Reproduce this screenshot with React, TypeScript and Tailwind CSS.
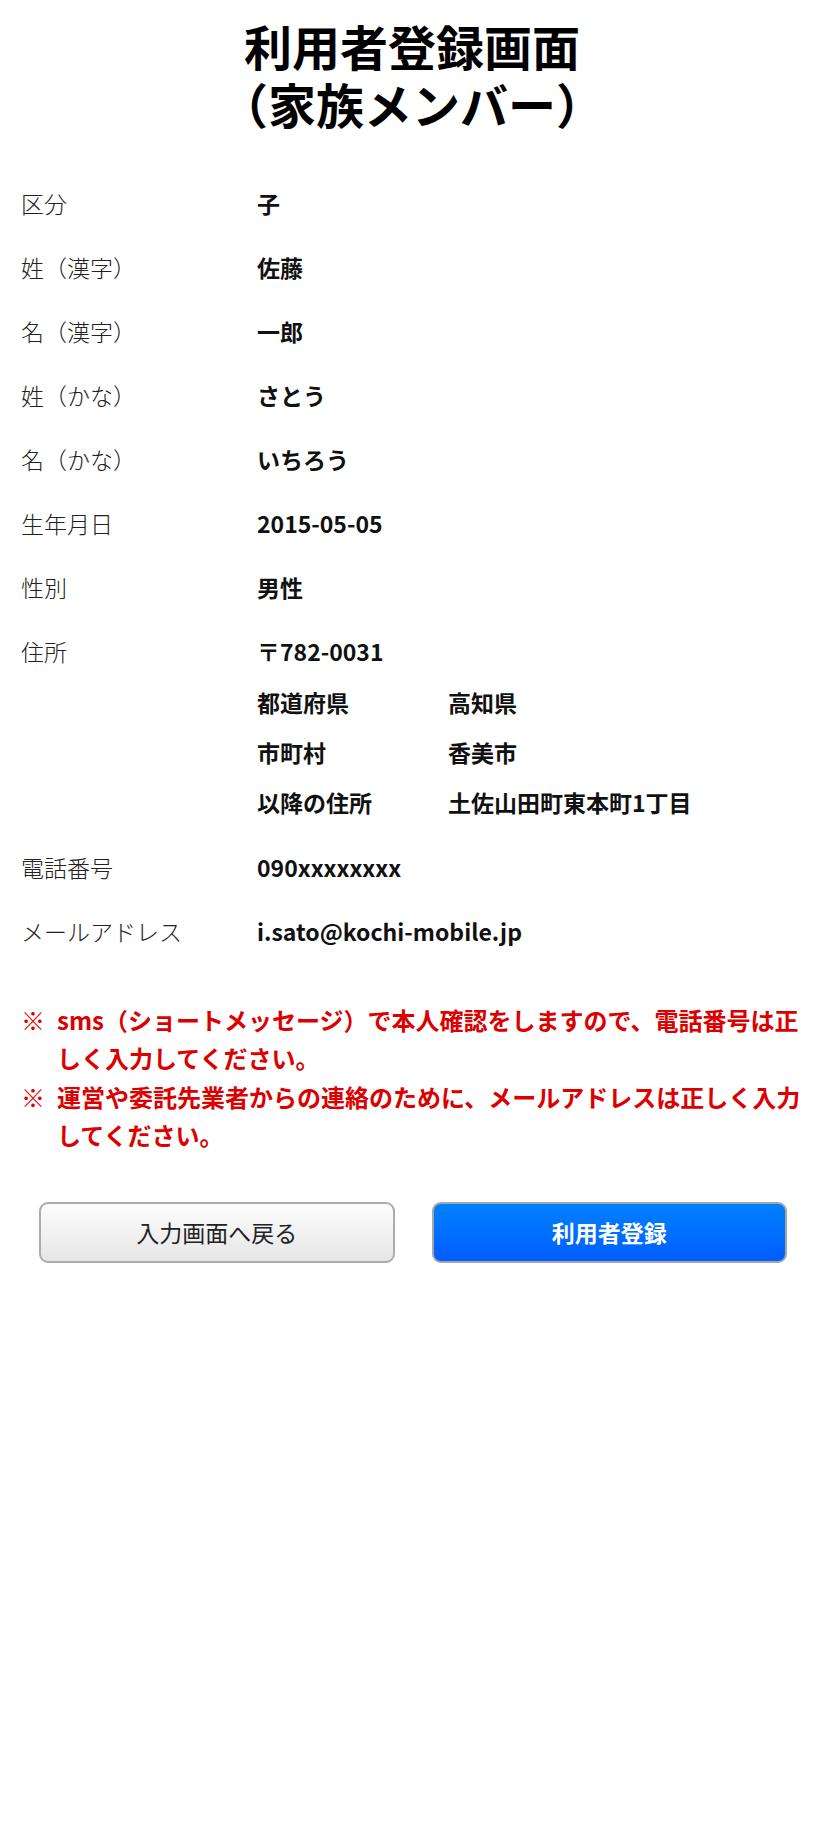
import React from "react";

const rows: { label: string; value: string }[] = [
  { label: "区分", value: "子" },
  { label: "姓（漢字）", value: "佐藤" },
  { label: "名（漢字）", value: "一郎" },
  { label: "姓（かな）", value: "さとう" },
  { label: "名（かな）", value: "いちろう" },
  { label: "生年月日", value: "2015-05-05" },
  { label: "性別", value: "男性" },
];

const addr: { label: string; value: string }[] = [
  { label: "都道府県", value: "高知県" },
  { label: "市町村", value: "香美市" },
  { label: "以降の住所", value: "土佐山田町東本町1丁目" },
];

function Row({ label, children }: { label: string; children: React.ReactNode }) {
  return (
    <div className="flex py-[14px]">
      <div className="w-[236px] shrink-0 text-[23px] leading-[36px] font-light text-[#222]">{label}</div>
      <div className="flex-1 text-[23px] leading-[36px] font-bold text-[#111]">{children}</div>
    </div>
  );
}

export default function App() {
  return (
    <div
      className="min-h-[1830px] bg-white text-black"
      style={{ fontFamily: '"Noto Sans CJK JP", "Noto Sans", sans-serif' }}
    >
      <h1 className="pt-[16px] text-center text-[48px] font-bold text-black">
        <div className="h-[58px] leading-[58px]">利用者登録画面</div>
        <div className="h-[58px] leading-[58px]">（家族メンバー）</div>
      </h1>

      <div className="mt-[39px] px-[21px]">
        {rows.map((r) => (
          <Row key={r.label} label={r.label}>
            {r.value}
          </Row>
        ))}
        <div className="flex pt-[14px] pb-[8px]">
          <div className="w-[236px] shrink-0 text-[23px] leading-[36px] font-light text-[#222]">住所</div>
          <div className="flex-1 text-[23px] font-bold text-[#111]">
            <div className="leading-[36px]">〒782-0031</div>
            <div className="mt-[8px]">
              {addr.map((a) => (
                <div key={a.label} className="flex h-[50px] items-center">
                  <div className="w-[191px] shrink-0">{a.label}</div>
                  <div>{a.value}</div>
                </div>
              ))}
            </div>
          </div>
        </div>
        <Row label="電話番号">090xxxxxxxx</Row>
        <Row label="メールアドレス">i.sato@kochi-mobile.jp</Row>
      </div>

      <div className="mt-[38px] pl-[21px] pr-[20px] text-[24px] leading-[38.4px] font-bold text-[#dc0000]">
        <div className="flex">
          <div className="w-[36px] shrink-0">※</div>
          <div className="flex-1">sms（ショートメッセージ）で本人確認をしますので、電話番号は正しく入力してください。</div>
        </div>
        <div className="flex">
          <div className="w-[36px] shrink-0">※</div>
          <div className="flex-1">運営や委託先業者からの連絡のために、メールアドレスは正しく入力してください。</div>
        </div>
      </div>

      <div className="mt-[47px] flex gap-[37px] pl-[39px] pr-[37px]">
        <button className="flex h-[61px] flex-1 items-center justify-center rounded-[9px] border-2 border-[#acacac] bg-gradient-to-b from-[#fdfdfd] to-[#e6e6e6] text-[23px] font-normal text-[#222]">
          入力画面へ戻る
        </button>
        <button className="flex h-[61px] flex-1 items-center justify-center rounded-[9px] border-2 border-[#a6a6a6] bg-gradient-to-b from-[#0080ff] to-[#005cff] text-[23px] font-bold text-white">
          利用者登録
        </button>
      </div>
    </div>
  );
}
